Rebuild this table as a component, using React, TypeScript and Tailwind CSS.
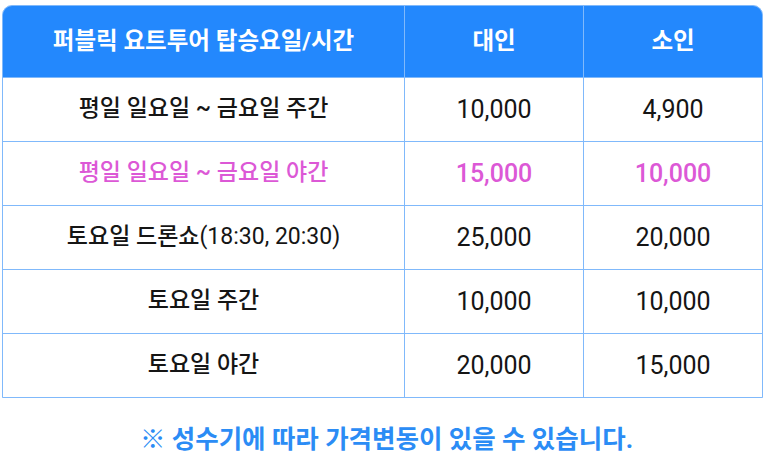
import type { ReactNode } from 'react'

export default function App() {
  const rows: { label: ReactNode; adult: string; child: string; hi: boolean }[] = [
    { label: '평일 일요일 ~ 금요일 주간', adult: '10,000', child: '4,900', hi: false },
    { label: '평일 일요일 ~ 금요일 야간', adult: '15,000', child: '10,000', hi: true },
    { label: <>토요일 드론쇼<span className="font-normal">(18:30, 20:30)</span></>, adult: '25,000', child: '20,000', hi: false },
    { label: '토요일 주간', adult: '10,000', child: '10,000', hi: false },
    { label: '토요일 야간', adult: '20,000', child: '15,000', hi: false },
  ]

  return (
    <div className="w-[773px] h-[461px] bg-white font-['Roboto','Noto_Sans_CJK_KR',sans-serif] overflow-hidden">
      <div className="pt-[5px] pl-[2px]">
        <div className="w-[761px] border border-[#80b9fb] bg-[#80b9fb] rounded-t-[10px] overflow-hidden grid grid-cols-[401px_178px_178px] auto-rows-[63px] grid-rows-[71px] gap-px">
          <div className="bg-[#2388fd] text-white font-bold text-[23.5px] flex items-center justify-center">퍼블릭 요트투어 탑승요일/시간</div>
          <div className="bg-[#2388fd] text-white font-bold text-[23.5px] flex items-center justify-center">대인</div>
          <div className="bg-[#2388fd] text-white font-bold text-[23.5px] flex items-center justify-center">소인</div>
          {rows.map((r, i) => {
            const color = r.hi ? 'text-[#dc58d6]' : 'text-[#151515]'
            return [
              <div key={`l${i}`} className={`bg-white flex items-center justify-center text-[23px] font-medium ${color}`}>{r.label}</div>,
              <div key={`a${i}`} className={`bg-white flex items-center justify-center text-[25px] ${r.hi ? 'font-medium' : ''} ${color}`}>{r.adult}</div>,
              <div key={`c${i}`} className={`bg-white flex items-center justify-center text-[25px] ${r.hi ? 'font-medium' : ''} ${color}`}>{r.child}</div>,
            ]
          })}
        </div>
      </div>
      <p className="mt-[26px] text-center text-[25.5px] leading-[30px] font-bold text-[#2b8cf5]">※ 성수기에 따라 가격변동이 있을 수 있습니다.</p>
    </div>
  )
}
